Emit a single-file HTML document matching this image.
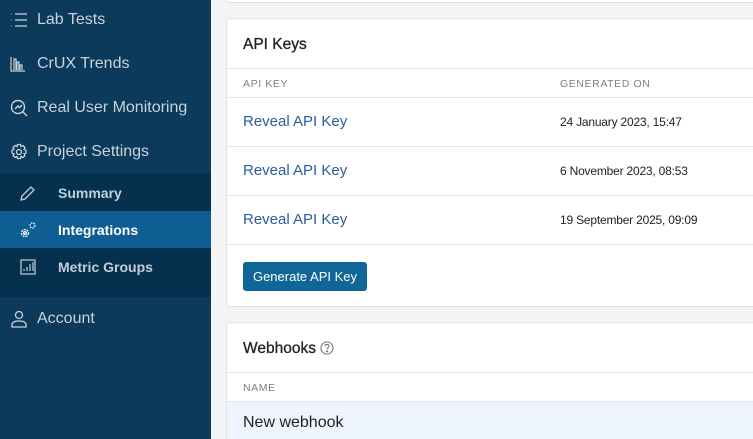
<!DOCTYPE html>
<html><head><style>
*{box-sizing:border-box;margin:0;padding:0}
html{width:753px;height:439px;overflow:hidden}
body{width:753px;height:439px;overflow:hidden;background:#f4f4f4;font-family:"Liberation Sans",sans-serif;position:relative}
.sb{position:absolute;left:0;top:0;width:211px;height:439px;background:#0b3a5b}
.it{position:absolute;left:0;width:211px;color:#c9d3dc;font-size:16px;display:flex;align-items:center}
.it svg{position:absolute;left:10px}
.it span{position:absolute;left:37px}
.sub{position:absolute;left:0;top:174px;width:211px;height:123px;background:#06314e}
.si{position:absolute;left:0;width:211px;height:37px;color:#c3ced8;font-size:14px;font-weight:bold;display:flex;align-items:center}
.si span{position:absolute;left:58px}
.si svg{position:absolute;left:19px}
.act{background:#0f5e93;color:#fff}
.card{position:absolute;left:226px;width:540px;background:#fff;border:1px solid #e2e2e2;border-radius:4px;overflow:hidden}
.h{position:absolute;left:16px;font-size:15.5px;color:#222;-webkit-text-stroke:.3px #222}
.row{position:absolute;left:0;width:100%;border-top:1px solid #e6e6e6}
.th{font-size:10.5px;color:#7a8088;letter-spacing:.6px}
.lk{position:absolute;left:16px;color:#2a5d9c;font-size:15px}
.dt{position:absolute;left:333px;color:#222;font-size:12px;letter-spacing:-.2px}
</style></head><body>
<div class="sb">
 <div class="it" style="top:10px;height:20px"><svg width="18" height="16" viewBox="0 0 18 16" fill="none" stroke="#c9d3dc" stroke-width="1.3"><path d="M5 2h12M5 8h12M5 14h12"/><path d="M1.5 2h.5M1.5 8h.5M1.5 14h.5"/></svg><span>Lab Tests</span></div>
 <div class="it" style="top:54px;height:20px"><svg width="16" height="16" viewBox="0 0 16 16" fill="none" stroke="#c9d3dc" stroke-width="1.2"><path d="M1 1v14h14M4 14V3h2v11M7 14V6h2v8M10 14V9h2v5"/></svg><span>CrUX Trends</span></div>
 <div class="it" style="top:98px;height:20px"><svg width="18" height="18" viewBox="0 0 18 18" fill="none" stroke="#c9d3dc" stroke-width="1.4"><circle cx="8" cy="8" r="6.5"/><path d="M13 13l4 4M5 10l3-3 1.5 1.5L12 6"/></svg><span>Real User Monitoring</span></div>
 <div class="it" style="top:142px;height:20px"><svg width="18" height="18" viewBox="0 0 18 18" fill="none" stroke="#c9d3dc" stroke-width="1.3"><path d="M7.5 1.5h3l.5 2 2-1 2 2-1 2 2 .5v3l-2 .5 1 2-2 2-2-1-.5 2h-3l-.5-2-2 1-2-2 1-2-2-.5v-3l2-.5-1-2 2-2 2 1z"/><circle cx="9" cy="9" r="2.5"/></svg><span>Project Settings</span></div>
 <div class="sub">
  <div class="si" style="top:0"><svg width="18" height="18" viewBox="0 0 18 18" fill="none" stroke="#c3ced8" stroke-width="1.3"><path d="M2 16l1-4L12 3l3 3-9 9z"/></svg><span>Summary</span></div>
  <div class="si act" style="top:37px"><svg width="18" height="18" viewBox="0 0 18 18" fill="none" stroke="#fff" stroke-width="1.3"><circle cx="6" cy="12" r="3.5" stroke-dasharray="2 1"/><circle cx="6" cy="12" r="1.3"/><circle cx="13.5" cy="4.5" r="2.5" stroke-dasharray="1.5 1"/></svg><span>Integrations</span></div>
  <div class="si" style="top:74px"><svg width="18" height="18" viewBox="0 0 18 18" fill="none" stroke="#c3ced8" stroke-width="1.2"><rect x="2" y="2" width="14" height="14"/><path d="M5 13v-2M8 13V9M11 13V6M14 13V4"/></svg><span>Metric Groups</span></div>
 </div>
 <div class="it" style="top:309px;height:20px"><svg width="18" height="18" viewBox="0 0 18 18" fill="none" stroke="#c9d3dc" stroke-width="1.3"><circle cx="9" cy="5" r="3.5"/><path d="M2 17v-2c0-3 3-4 7-4s7 1 7 4v2z"/></svg><span>Account</span></div>
</div>
<div class="card" style="top:-10px;height:13px;border-radius:0 0 4px 4px"></div>
<div class="card" style="top:18px;height:289px">
 <div class="h" style="top:17px">API Keys</div>
 <div class="row th" style="top:49px;height:30px"><span style="position:absolute;left:16px;top:9px">API KEY</span><span style="position:absolute;left:333px;top:9px">GENERATED ON</span></div>
 <div class="row" style="top:78px;height:49px"><span class="lk" style="top:15px">Reveal API Key</span><span class="dt" style="top:17px">24 January 2023, 15:47</span></div>
 <div class="row" style="top:127px;height:49px"><span class="lk" style="top:15px">Reveal API Key</span><span class="dt" style="top:17px">6 November 2023, 08:53</span></div>
 <div class="row" style="top:176px;height:49px"><span class="lk" style="top:15px">Reveal API Key</span><span class="dt" style="top:17px">19 September 2025, 09:09</span></div>
 <div class="row" style="top:225px;height:60px"></div>
 <div style="position:absolute;left:16px;top:243px;width:124px;height:29px;background:#0f6697;border-radius:3px;color:#fff;font-size:13px;line-height:29px;text-align:center">Generate API Key</div>
</div>
<div class="card" style="top:322px;height:130px">
 <div class="h" style="top:17px">Webhooks <svg style="vertical-align:-2px" width="14" height="14" viewBox="0 0 14 14" fill="none" stroke="#777" stroke-width="1.1"><circle cx="7" cy="7" r="6"/><path d="M5 5.3c0-1.3 1-1.9 2-1.9s2 .6 2 1.7c0 1.4-2 1.5-2 3"/><circle cx="7" cy="10.3" r=".5" fill="#777"/></svg></div>
 <div class="row th" style="top:49px;height:30px"><span style="position:absolute;left:16px;top:9px">NAME</span></div>
 <div class="row" style="top:78px;height:50px;background:#edf4fd"><span style="position:absolute;left:16px;top:12px;font-size:16px;color:#222">New webhook</span></div>
</div>
</body></html>
